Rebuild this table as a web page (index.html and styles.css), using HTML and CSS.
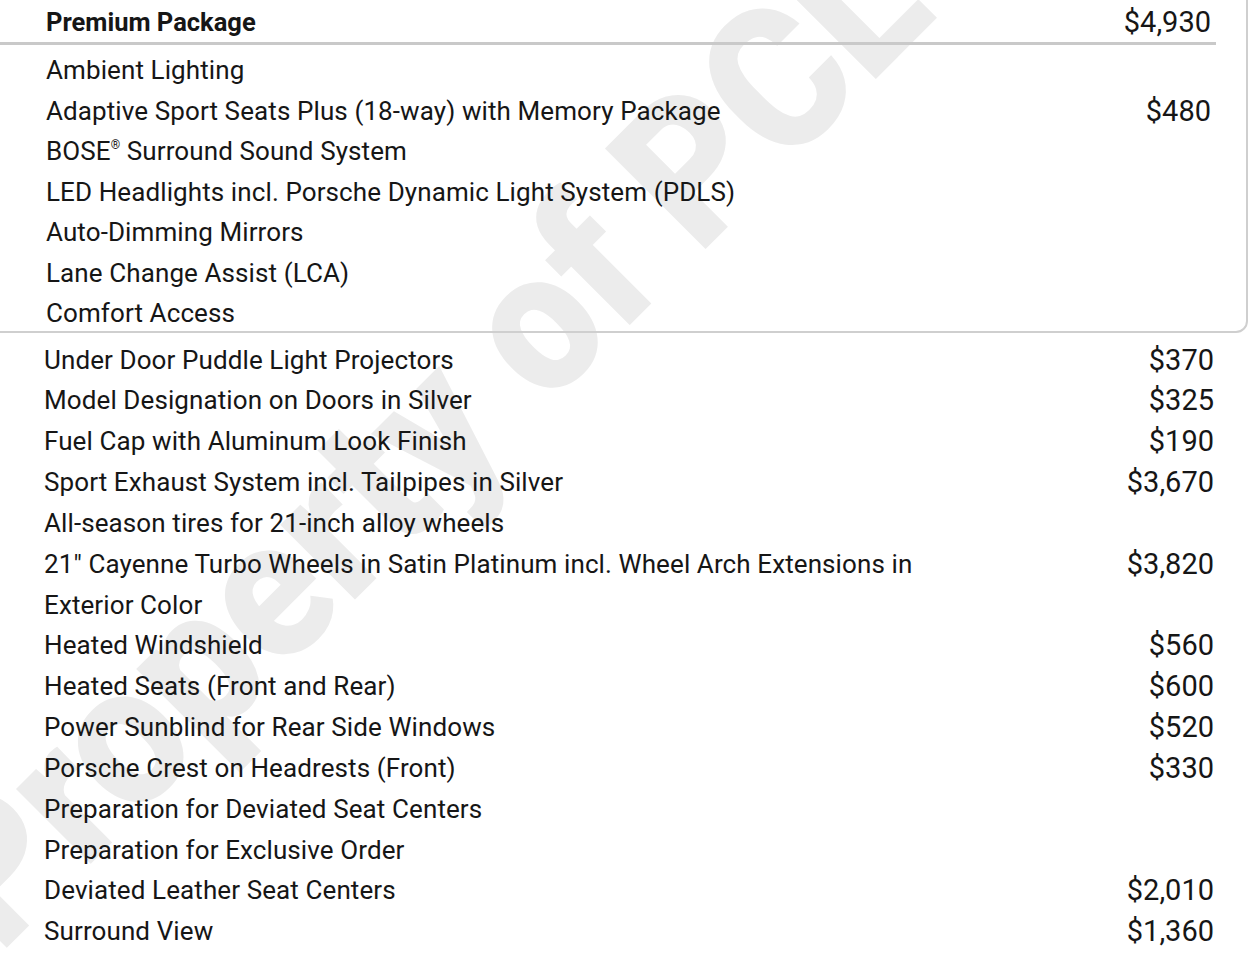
FILE: index.html
```html
<!DOCTYPE html>
<html lang="en">
<head>
<meta charset="utf-8">
<title>Premium Package</title>
<link rel="stylesheet" href="styles.css">
</head>
<body>
<div class="page">
  <div class="watermark">Property of PCL</div>
  <section class="pkg">
    <div class="pkg-head">
      <span class="pkg-name">Premium Package</span>
      <span class="price">$4,930</span>
    </div>
    <ul class="rows pkg-items">
      <li class="row"><span class="item">Ambient Lighting</span></li>
      <li class="row"><span class="item">Adaptive Sport Seats Plus (18-way) with Memory Package</span><span class="price">$480</span></li>
      <li class="row"><span class="item">BOSE<sup class="reg">®</sup> Surround Sound System</span></li>
      <li class="row"><span class="item">LED Headlights incl. Porsche Dynamic Light System (PDLS)</span></li>
      <li class="row"><span class="item">Auto-Dimming Mirrors</span></li>
      <li class="row"><span class="item">Lane Change Assist (LCA)</span></li>
      <li class="row"><span class="item">Comfort Access</span></li>
    </ul>
  </section>
  <ul class="rows options">
    <li class="row"><span class="item">Under Door Puddle Light Projectors</span><span class="price">$370</span></li>
    <li class="row"><span class="item">Model Designation on Doors in Silver</span><span class="price">$325</span></li>
    <li class="row"><span class="item">Fuel Cap with Aluminum Look Finish</span><span class="price">$190</span></li>
    <li class="row"><span class="item">Sport Exhaust System incl. Tailpipes in Silver</span><span class="price">$3,670</span></li>
    <li class="row"><span class="item">All-season tires for 21-inch alloy wheels</span></li>
    <li class="row"><span class="item wrap">21" Cayenne Turbo Wheels in Satin Platinum incl. Wheel Arch Extensions in Exterior Color</span><span class="price">$3,820</span></li>
    <li class="row"><span class="item">Heated Windshield</span><span class="price">$560</span></li>
    <li class="row"><span class="item">Heated Seats (Front and Rear)</span><span class="price">$600</span></li>
    <li class="row"><span class="item">Power Sunblind for Rear Side Windows</span><span class="price">$520</span></li>
    <li class="row"><span class="item">Porsche Crest on Headrests (Front)</span><span class="price">$330</span></li>
    <li class="row"><span class="item">Preparation for Deviated Seat Centers</span></li>
    <li class="row"><span class="item">Preparation for Exclusive Order</span></li>
    <li class="row"><span class="item">Deviated Leather Seat Centers</span><span class="price">$2,010</span></li>
    <li class="row"><span class="item">Surround View</span><span class="price">$1,360</span></li>
  </ul>
</div>
</body>
</html>
```
FILE: styles.css
```css
html, body {
  margin: 0;
  padding: 0;
  background: #ffffff;
}

body {
  font-family: Roboto, "Liberation Sans", sans-serif;
  color: #161616;
  overflow: hidden;
}

.page {
  position: relative;
  width: 1249px;
  height: 960px;
  overflow: hidden;
}

.watermark {
  position: absolute;
  left: -119px;
  top: 836px;
  transform-origin: 0 0;
  transform: rotate(-45deg) scaleX(0.92);
  font-family: Roboto, "Liberation Sans", sans-serif;
  font-weight: 900;
  font-size: 200px;
  line-height: 1;
  color: #ececec;
  white-space: nowrap;
  z-index: 0;
}

.pkg {
  position: relative;
  z-index: 1;
  margin: -20px 1px 0 -20px;
  border: 2px solid #cfcfcf;
  border-radius: 12px;
  padding: 0 35px 0 64px;
}

.pkg-head {
  display: flex;
  justify-content: space-between;
  align-items: center;
  height: 40px;
  padding: 20px 5px 0 70px;
  margin: 0 -5px 0 -70px;
  border-bottom: 3px solid #c9c9c9;
}

.pkg-name {
  font-weight: 700;
  font-size: 25.5px;
}

.rows {
  list-style: none;
  margin: 0;
  padding: 0;
}

.pkg-items {
  padding-top: 5px;
  margin-bottom: -3px;
}

.row {
  display: flex;
  justify-content: space-between;
  align-items: flex-start;
  line-height: 40.5px;
  font-size: 26px;
}

.options {
  position: relative;
  z-index: 1;
  margin-top: 7px;
  padding: 0 35px 0 44px;
}

.options .row {
  line-height: 40.85px;
}

.item {
  letter-spacing: 0.1px;
}

.wrap {
  max-width: 900px;
}

.price {
  font-size: 29px;
  font-weight: 400;
}

.reg {
  font-size: 12px;
  vertical-align: 0;
  position: relative;
  top: -11px;
  line-height: 0;
}
```
